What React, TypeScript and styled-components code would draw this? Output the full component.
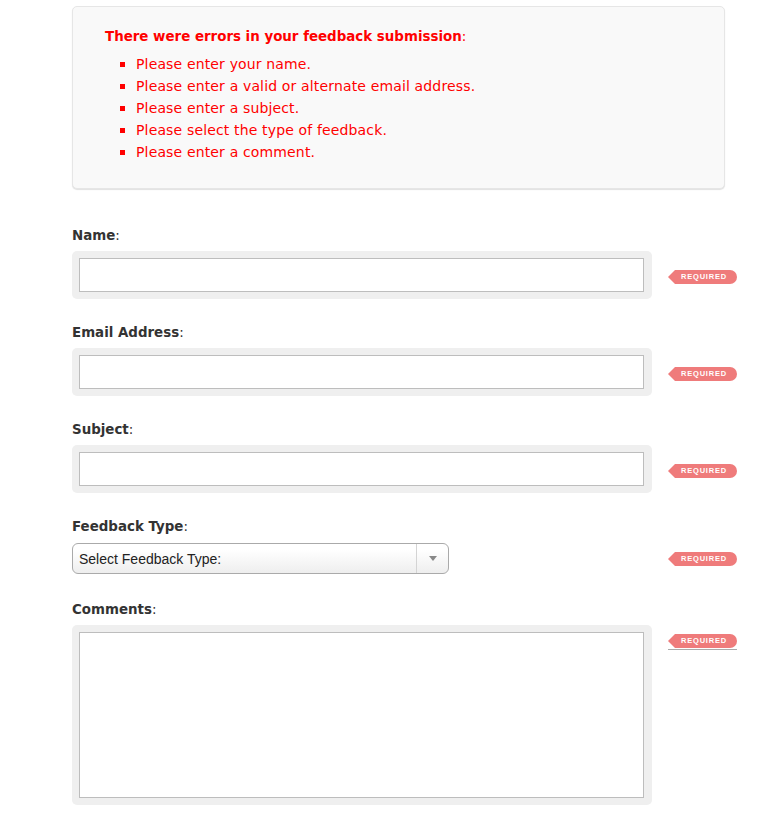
import React from "react";
import styled, { createGlobalStyle } from "styled-components";

const Global = createGlobalStyle`
  html, body { margin: 0; padding: 0; background: #fff; }
  body { font-family: "DejaVu Sans", Verdana, sans-serif; color: #333; }
  * { box-sizing: border-box; }
`;

const Page = styled.div`
  width: 777px;
  padding: 6px 0 0 72px;
`;

const ErrorBox = styled.div`
  width: 653px;
  background: #f9f9f9;
  border: 1px solid #e6e6e6;
  border-radius: 5px;
  box-shadow: 0 1px 1px rgba(0, 0, 0, 0.12);
  padding: 19px 32px 25px 32px;
  color: #ff0000;
  margin-bottom: 37px;
`;

const ErrorTitle = styled.div`
  font-size: 13.4px;
  line-height: 22px;
  height: 22px;
  margin-bottom: 5px;
  strong { font-weight: bold; }
`;

const ErrorList = styled.ul`
  list-style: none;
  margin: 0;
  padding: 0 0 0 31px;
`;

const ErrorItem = styled.li`
  position: relative;
  font-size: 14px;
  letter-spacing: 0.15px;
  line-height: 22px;
  height: 22px;
  &::before {
    content: "";
    position: absolute;
    left: -16px;
    top: 9px;
    width: 5px;
    height: 5px;
    background: #ff0000;
  }
`;

const Field = styled.div<{ $gap?: number }>`
  display: grid;
  grid-template-columns: 580px auto;
  column-gap: 16px;
  align-items: start;
  margin-bottom: ${(p) => p.$gap ?? 24}px;
`;

const Label = styled.label`
  grid-column: 1 / span 2;
  display: block;
  font-size: 13.4px;
  line-height: 20px;
  height: 20px;
  color: #333;
  margin-bottom: 5px;
  strong { font-weight: bold; }
`;

const InputWrap = styled.div`
  background: #efefef;
  border-radius: 5px;
  padding: 7px 8px 7px 7px;
`;

const TextInput = styled.input`
  display: block;
  width: 100%;
  height: 34px;
  border: 1px solid #bdbdbd;
  background: #fff;
  margin: 0;
  padding: 0 6px;
  font: 14px "DejaVu Sans", sans-serif;
  outline: none;
`;

const TextArea = styled.textarea`
  display: block;
  width: 100%;
  height: 166px;
  border: 1px solid #bdbdbd;
  background: #fff;
  margin: 0;
  padding: 6px;
  resize: none;
  font: 14px "DejaVu Sans", sans-serif;
  outline: none;
`;

const SelectBox = styled.div`
  width: 377px;
  height: 31px;
  margin-top: 1px;
  border: 1px solid #aaa;
  border-radius: 6px;
  background: linear-gradient(#ffffff 20%, #eeeeee 100%);
  display: flex;
  align-items: center;
  font-family: "Liberation Sans", Arial, sans-serif;
  font-size: 14px;
  color: #222;
`;

const SelectText = styled.span`
  flex: 1;
  padding-left: 6px;
  padding-top: 1px;
`;

const SelectArrow = styled.span`
  width: 32px;
  align-self: stretch;
  border-left: 1px solid #d4d4d4;
  display: flex;
  align-items: center;
  justify-content: center;
  &::after {
    content: "";
    border-left: 4px solid transparent;
    border-right: 4px solid transparent;
    border-top: 5px solid #888;
  }
`;

const BadgeCell = styled.div<{ $top: number; $underline?: boolean }>`
  margin-top: ${(p) => p.$top}px;
  width: 69px;
  padding-bottom: ${(p) => (p.$underline ? 1 : 0)}px;
  border-bottom: ${(p) => (p.$underline ? "1px solid #aaa" : "none")};
`;

const Badge = styled.span`
  position: relative;
  display: block;
  margin-left: 7px;
  height: 14px;
  width: 62px;
  background: #ef7b7b;
  border-radius: 0 7px 7px 0;
  color: #fff;
  font-family: "Liberation Sans", Arial, sans-serif;
  font-weight: bold;
  font-size: 7.5px;
  letter-spacing: 0.8px;
  line-height: 14px;
  text-align: center;
  padding-right: 4px;
  &::before {
    content: "";
    position: absolute;
    left: -7px;
    top: 0;
    border-top: 7px solid transparent;
    border-bottom: 7px solid transparent;
    border-right: 7px solid #ef7b7b;
  }
`;

const Required = ({ top, underline }: { top: number; underline?: boolean }) => (
  <BadgeCell $top={top} $underline={underline}>
    <Badge>REQUIRED</Badge>
  </BadgeCell>
);

const errors = [
  "Please enter your name.",
  "Please enter a valid or alternate email address.",
  "Please enter a subject.",
  "Please select the type of feedback.",
  "Please enter a comment.",
];

export default function App() {
  return (
    <Page>
      <Global />
      <ErrorBox>
        <ErrorTitle>
          <strong>There were errors in your feedback submission</strong>:
        </ErrorTitle>
        <ErrorList>
          {errors.map((e) => (
            <ErrorItem key={e}>{e}</ErrorItem>
          ))}
        </ErrorList>
      </ErrorBox>

      <Field>
        <Label>
          <strong>Name</strong>:
        </Label>
        <InputWrap>
          <TextInput type="text" />
        </InputWrap>
        <Required top={19} />
      </Field>

      <Field>
        <Label>
          <strong>Email Address</strong>:
        </Label>
        <InputWrap>
          <TextInput type="text" />
        </InputWrap>
        <Required top={19} />
      </Field>

      <Field>
        <Label>
          <strong>Subject</strong>:
        </Label>
        <InputWrap>
          <TextInput type="text" />
        </InputWrap>
        <Required top={19} />
      </Field>

      <Field $gap={26}>
        <Label>
          <strong>Feedback Type</strong>:
        </Label>
        <SelectBox>
          <SelectText>Select Feedback Type:</SelectText>
          <SelectArrow />
        </SelectBox>
        <Required top={10} />
      </Field>

      <Field $gap={10}>
        <Label>
          <strong>Comments</strong>:
        </Label>
        <InputWrap>
          <TextArea />
        </InputWrap>
        <Required top={9} underline />
      </Field>
    </Page>
  );
}
